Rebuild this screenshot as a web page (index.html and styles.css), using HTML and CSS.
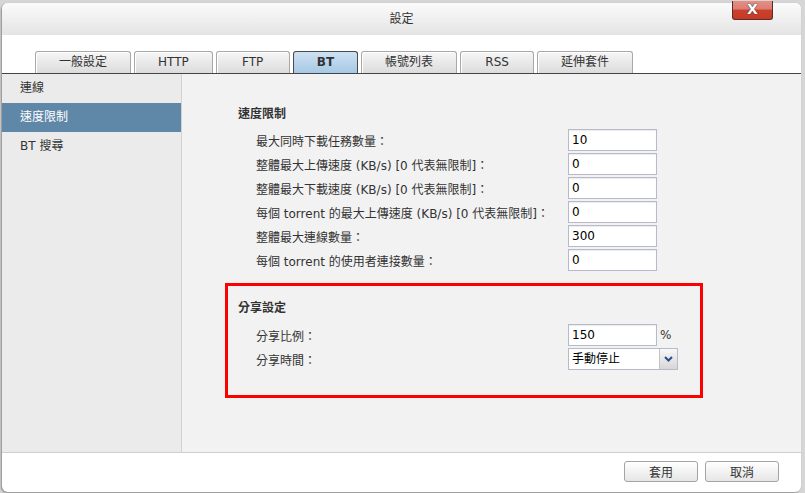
FILE: index.html
```html
<!DOCTYPE html>
<html lang="zh-Hant">
<head>
  <meta charset="UTF-8">
  <title>設定</title>
  <link rel="stylesheet" href="styles.css">
</head>
<body>

  <div class="dialog">
    <div class="titlebar">
      設定
      <a class="close" href="#">X</a>
    </div>

    <div class="tabs">
      <div class="tab">一般設定</div>
      <div class="tab">HTTP</div>
      <div class="tab">FTP</div>
      <div class="tab active">BT</div>
      <div class="tab">帳號列表</div>
      <div class="tab">RSS</div>
      <div class="tab">延伸套件</div>
    </div>

    <div class="main">
      <ul class="side">
        <li>連線</li>
        <li class="selected">速度限制</li>
        <li>BT 搜尋</li>
      </ul>

      <div class="content">
        <div class="section">
          <h3>速度限制</h3>
          <div class="row"><label>最大同時下載任務數量：</label><input type="text" value="10"></div>
          <div class="row"><label>整體最大上傳速度 (KB/s) [0 代表無限制]：</label><input type="text" value="0"></div>
          <div class="row"><label>整體最大下載速度 (KB/s) [0 代表無限制]：</label><input type="text" value="0"></div>
          <div class="row"><label>每個 torrent 的最大上傳速度 (KB/s) [0 代表無限制]：</label><input type="text" value="0"></div>
          <div class="row"><label>整體最大連線數量：</label><input type="text" value="300"></div>
          <div class="row"><label>每個 torrent 的使用者連接數量：</label><input type="text" value="0"></div>
        </div>

        <div class="section share">
          <h3>分享設定</h3>
          <div class="row"><label>分享比例：</label><input type="text" value="150"><span class="unit">%</span></div>
          <div class="row">
            <label>分享時間：</label>
            <div class="select">
              <span>手動停止</span>
              <span class="arrow">
                <svg width="9" height="6" viewBox="0 0 9 6"><path d="M1 1 L4.5 4.5 L8 1" fill="none" stroke="#2b4f8c" stroke-width="2"/></svg>
              </span>
            </div>
          </div>
        </div>
      </div>
    </div>

    <div class="footer">
      <button>套用</button>
      <button>取消</button>
    </div>
  </div>

</body>
</html>
```

FILE: styles.css
```css
* {
  box-sizing: border-box;
}

body {
  margin: 0;
  padding: 3px 4px 1px 2px;
  background: #d6d6d6;
  font-family: "DejaVu Sans", "Noto Sans CJK TC", sans-serif;
  font-size: 12px;
  color: #333;
}

.dialog {
  position: relative;
  width: 799px;
  height: 489px;
  background: #fff;
  border-radius: 6px;
  box-shadow: -1px 1px 2px rgba(0, 0, 0, 0.35);
}

.titlebar {
  height: 32px;
  line-height: 32px;
  text-align: center;
  background: linear-gradient(#fbfbfb, #e4e4e4);
  border-radius: 6px 6px 0 0;
  color: #333;
}

.close {
  position: absolute;
  top: -2px;
  right: 28px;
  width: 41px;
  height: 19px;
  line-height: 17px;
  text-align: center;
  text-decoration: none;
  font-family: "DejaVu Sans", sans-serif;
  font-weight: bold;
  font-size: 14px;
  color: #fff;
  text-shadow: 0 0 1px #333, 0 0 1px #333;
  background: linear-gradient(#e48f86 0%, #de7d72 45%, #c9412c 50%, #c43a26 100%);
  border: 1px solid #5a2d25;
  border-top: none;
  border-radius: 0 0 3px 3px;
}

.tabs {
  display: flex;
  gap: 3px;
  height: 39px;
  padding: 16px 0 0 33px;
  border-bottom: 1px solid #444;
}

.tab {
  min-width: 74px;
  height: 22px;
  line-height: 20px;
  padding: 0 23px;
  text-align: center;
  border: 1px solid #a8a8a8;
  border-bottom: none;
  border-radius: 3px 3px 0 0;
  background: linear-gradient(#f6f6f6, #dcdcdc);
  box-shadow: inset 1px 1px 0 #fff;
  color: #333;
}

.tab.active {
  min-width: 0;
  font-weight: bold;
  border-color: #4a4a4a;
  background: linear-gradient(#cde1f2, #a6c8e6);
  box-shadow: none;
}

.main {
  display: flex;
  height: 379px;
  border-bottom: 1px solid #cfcfcf;
}

.side {
  width: 180px;
  margin: 0;
  padding: 0;
  list-style: none;
  background: #ebebeb;
  border-right: 1px solid #d2d2d2;
}

.side li {
  height: 29px;
  line-height: 29px;
  padding-left: 18px;
  color: #333;
}

.side li.selected {
  background: #5f87a8;
  color: #fff;
}

.content {
  flex: 1;
  background: #f2f2f2;
  padding: 32px 0 0 43px;
}

.section {
  padding-left: 13px;
}

h3 {
  margin: 0 0 6px;
  font-size: 12px;
  line-height: 16px;
  color: #333;
}

.row {
  display: flex;
  align-items: center;
  height: 24px;
}

.row label {
  width: 330px;
  padding-left: 18px;
  white-space: nowrap;
}

.row input {
  width: 89px;
  height: 22px;
  padding: 0 3px;
  border: 1px solid #b6bacb;
  background: #fff;
  font-family: "DejaVu Sans", "Noto Sans CJK TC", sans-serif;
  font-size: 12px;
  color: #000;
  box-shadow: inset 0 1px 1px #ececec;
}

.unit {
  margin-left: 3px;
}

.share {
  width: 478px;
  margin-top: 11px;
  padding: 14px 0 24px 10px;
  border: 3px solid #ff0000;
}

.share h3 {
  margin-bottom: 7px;
}

.select {
  display: flex;
  width: 110px;
  height: 22px;
  border: 1px solid #b6bacb;
  background: #fff;
  color: #000;
}

.select span:first-child {
  flex: 1;
  line-height: 20px;
  padding-left: 3px;
}

.arrow {
  width: 18px;
  display: flex;
  align-items: center;
  justify-content: center;
  border-left: 1px solid #c4c4c4;
  background: linear-gradient(#f8f8f8, #d6d6d6);
}

.footer {
  display: flex;
  justify-content: flex-end;
  gap: 7px;
  height: 39px;
  padding: 8px 22px 0 0;
  border-radius: 0 0 6px 6px;
}

button {
  min-width: 74px;
  height: 21px;
  padding: 0 10px;
  font-family: "DejaVu Sans", "Noto Sans CJK TC", sans-serif;
  font-size: 12px;
  color: #333;
  background: linear-gradient(#ffffff, #e6e6e6);
  border: 1px solid #a4a4a4;
  border-radius: 3px;
}
```
